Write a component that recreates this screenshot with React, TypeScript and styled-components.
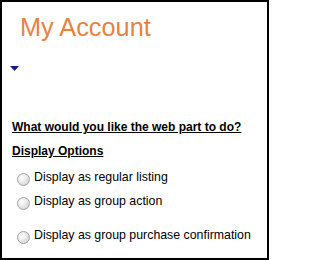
import React from "react";
import styled, { createGlobalStyle } from "styled-components";

const Global = createGlobalStyle`
  html, body { margin: 0; padding: 0; background: #fff; }
  body { font-family: "Liberation Sans", Arial, sans-serif; }
`;

const Panel = styled.div`
  box-sizing: border-box;
  width: 269px;
  height: 260px;
  border: 2px solid #000;
  background: #fff;
  display: flex;
  flex-direction: column;
`;

const Title = styled.h1`
  margin: 11px 0 0 18px;
  font-family: "Liberation Sans", Arial, sans-serif;
  font-weight: normal;
  font-size: 25.3px;
  line-height: 28px;
  color: #e8823f;
`;

const Toggle = styled.div`
  margin: 25px 0 0 8px;
  width: 9px;
  height: 5px;
  display: flex;
`;

const Heading = styled.div`
  margin: 44px 0 0 10px;
  font-size: 12px;
  font-weight: bold;
  line-height: 24px;
  color: #000;
  text-decoration: underline;
`;

const SubHeading = styled(Heading)`
  margin-top: 0;
`;

const Options = styled.div`
  display: flex;
  flex-direction: column;
  margin-top: 2px;
`;

const OptionRow = styled.label<{ $gap?: number }>`
  display: flex;
  align-items: flex-start;
  height: 24px;
  margin-top: ${(p) => p.$gap ?? 0}px;
  padding-left: 15px;
  font-size: 12.35px;
  line-height: 24px;
  color: #000;
`;

const Radio = styled.input.attrs({ type: "radio" })`
  appearance: none;
  -webkit-appearance: none;
  box-sizing: border-box;
  width: 13px;
  height: 13px;
  margin: 8px 4px 0 0;
  border-radius: 50%;
  border: 1px solid #a2a2a2;
  background: radial-gradient(circle at 35% 35%, #ffffff 0%, #ececec 40%, #c6c6c6 100%);
  flex-shrink: 0;
`;

const options = [
  { label: "Display as regular listing", gap: 0 },
  { label: "Display as group action", gap: 0 },
  { label: "Display as group purchase confirmation", gap: 10 },
];

export default function App() {
  return (
    <>
      <Global />
      <Panel>
        <Title>My Account</Title>
        <Toggle>
          <svg width="9" height="5" viewBox="0 0 9 5">
            <polygon points="0,0 9,0 4.5,5" fill="#0a1f8f" />
          </svg>
        </Toggle>
        <Heading>What would you like the web part to do?</Heading>
        <SubHeading>Display Options</SubHeading>
        <Options>
          {options.map((o) => (
            <OptionRow key={o.label} $gap={o.gap}>
              <Radio name="display" />
              <span>{o.label}</span>
            </OptionRow>
          ))}
        </Options>
      </Panel>
    </>
  );
}
